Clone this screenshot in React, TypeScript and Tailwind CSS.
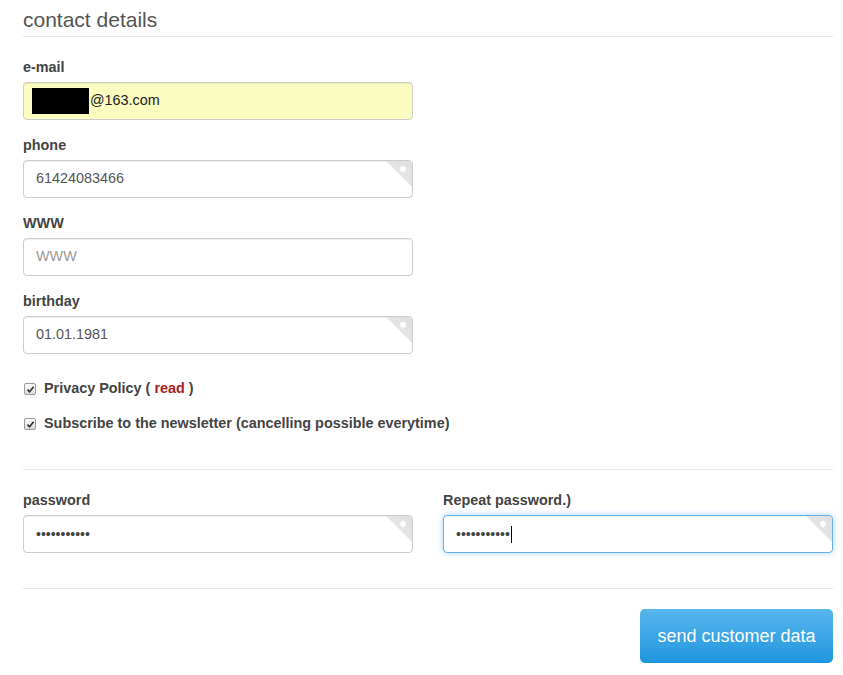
import React from 'react';

// small grey corner marking a required field
const RequiredCorner = () => (
    <div className="pointer-events-none absolute right-0 top-0 h-[26px] w-[26px] overflow-hidden rounded-tr-[4px]">
        <div className="absolute inset-0 bg-gradient-to-bl from-[#dedede] to-[#ececec] [clip-path:polygon(0_0,100%_0,100%_100%)]" />
        <svg className="absolute right-[5px] top-[4px]" width="8" height="8" viewBox="0 0 8 8">
            <path d="M4 0.5 V7.5 M1 2.2 L7 5.8 M7 2.2 L1 5.8" stroke="#fff" strokeWidth="1.7" />
        </svg>
    </div>
);

const Field = ({
    label,
    value,
    placeholder,
    required,
    focused,
    bg = 'bg-white',
    className = '',
}: {
    label: string;
    value?: React.ReactNode;
    placeholder?: string;
    required?: boolean;
    focused?: boolean;
    bg?: string;
    className?: string;
}) => (
    <div className={className}>
        <div className="mb-[5px] h-[20px] text-[14.4px] font-bold leading-[20px] text-[#444]">{label}</div>
        <div
            className={`relative flex h-[38px] items-center rounded-[4px] border px-[12px] text-[14.4px] ${bg} ${
                focused
                    ? 'border-[#66afe9] shadow-[0_0_6px_rgba(102,175,233,0.55)]'
                    : 'border-[#cccccc] shadow-[inset_0_1px_1px_rgba(0,0,0,0.07)]'
            }`}
        >
            {value ? (
                <span className="text-[#555]">{value}</span>
            ) : (
                <span className="text-[#999]">{placeholder}</span>
            )}
            {required && <RequiredCorner />}
        </div>
    </div>
);

const Check = ({ children }: { children: React.ReactNode }) => (
    <div className="flex h-[20px] items-center gap-[8px] text-[14.4px] font-bold text-[#444]">
        <span className="ml-[1px] flex h-[12px] w-[12px] items-center justify-center rounded-[2px] border border-[#9a9a9a] bg-gradient-to-b from-[#fcfcfc] to-[#dcdcdc]">
            <svg width="9" height="9" viewBox="0 0 9 9">
                <path d="M1.5 4.6 L3.6 6.8 L7.6 1.8" stroke="#333" strokeWidth="1.6" fill="none" />
            </svg>
        </span>
        <span>{children}</span>
    </div>
);

const Dots = ({ caret }: { caret?: boolean }) => (
    <span className="flex items-center text-[#444]">
        <span className="text-[14px]">•••••••••••</span>
        {caret && <span className="ml-[1px] inline-block h-[17px] w-px bg-black" />}
    </span>
);

export default function App() {
    return (
        <div className="min-h-[675px] w-[843px] bg-white pl-[23px] pr-[10px] pt-[7px] font-['Liberation_Sans',Arial,sans-serif]">
            <h2 className="text-[21px] leading-[26px] text-[#555]">contact details</h2>
            <div className="mt-[3px] border-t border-[#e5e5e5]" />

            <div className="w-[390px] pt-[20px]">
                <Field
                    label="e-mail"
                    bg="bg-[#fafcc0]"
                    value={
                        <span className="flex items-center text-[#222]">
                            <span className="-ml-[4px] mr-[1px] inline-block h-[26px] w-[57px] bg-black" />
                            @163.com
                        </span>
                    }
                />
                <Field className="mt-[15px]" label="phone" value="61424083466" required />
                <Field className="mt-[15px]" label="WWW" placeholder="WWW" />
                <Field className="mt-[15px]" label="birthday" value="01.01.1981" required />
            </div>

            <div className="mt-[25px] flex flex-col gap-[15px]">
                <Check>
                    Privacy Policy ( <span className="text-[#a71d1d]">read</span> )
                </Check>
                <Check>Subscribe to the newsletter (cancelling possible everytime)</Check>
            </div>

            <div className="mt-[35px] border-t border-[#e5e5e5]" />

            <div className="mt-[20px] grid grid-cols-2 gap-[30px]">
                <Field label="password" value={<Dots />} required />
                <Field label="Repeat password.)" value={<Dots caret />} required focused />
            </div>

            <div className="mt-[35px] border-t border-[#e5e5e5]" />

            <div className="mt-[20px] flex justify-end">
                <button className="h-[54px] w-[193px] rounded-[5px] bg-gradient-to-b from-[#56b6ed] to-[#1b96de] text-[18px] text-white">
                    send customer data
                </button>
            </div>
        </div>
    );
}
